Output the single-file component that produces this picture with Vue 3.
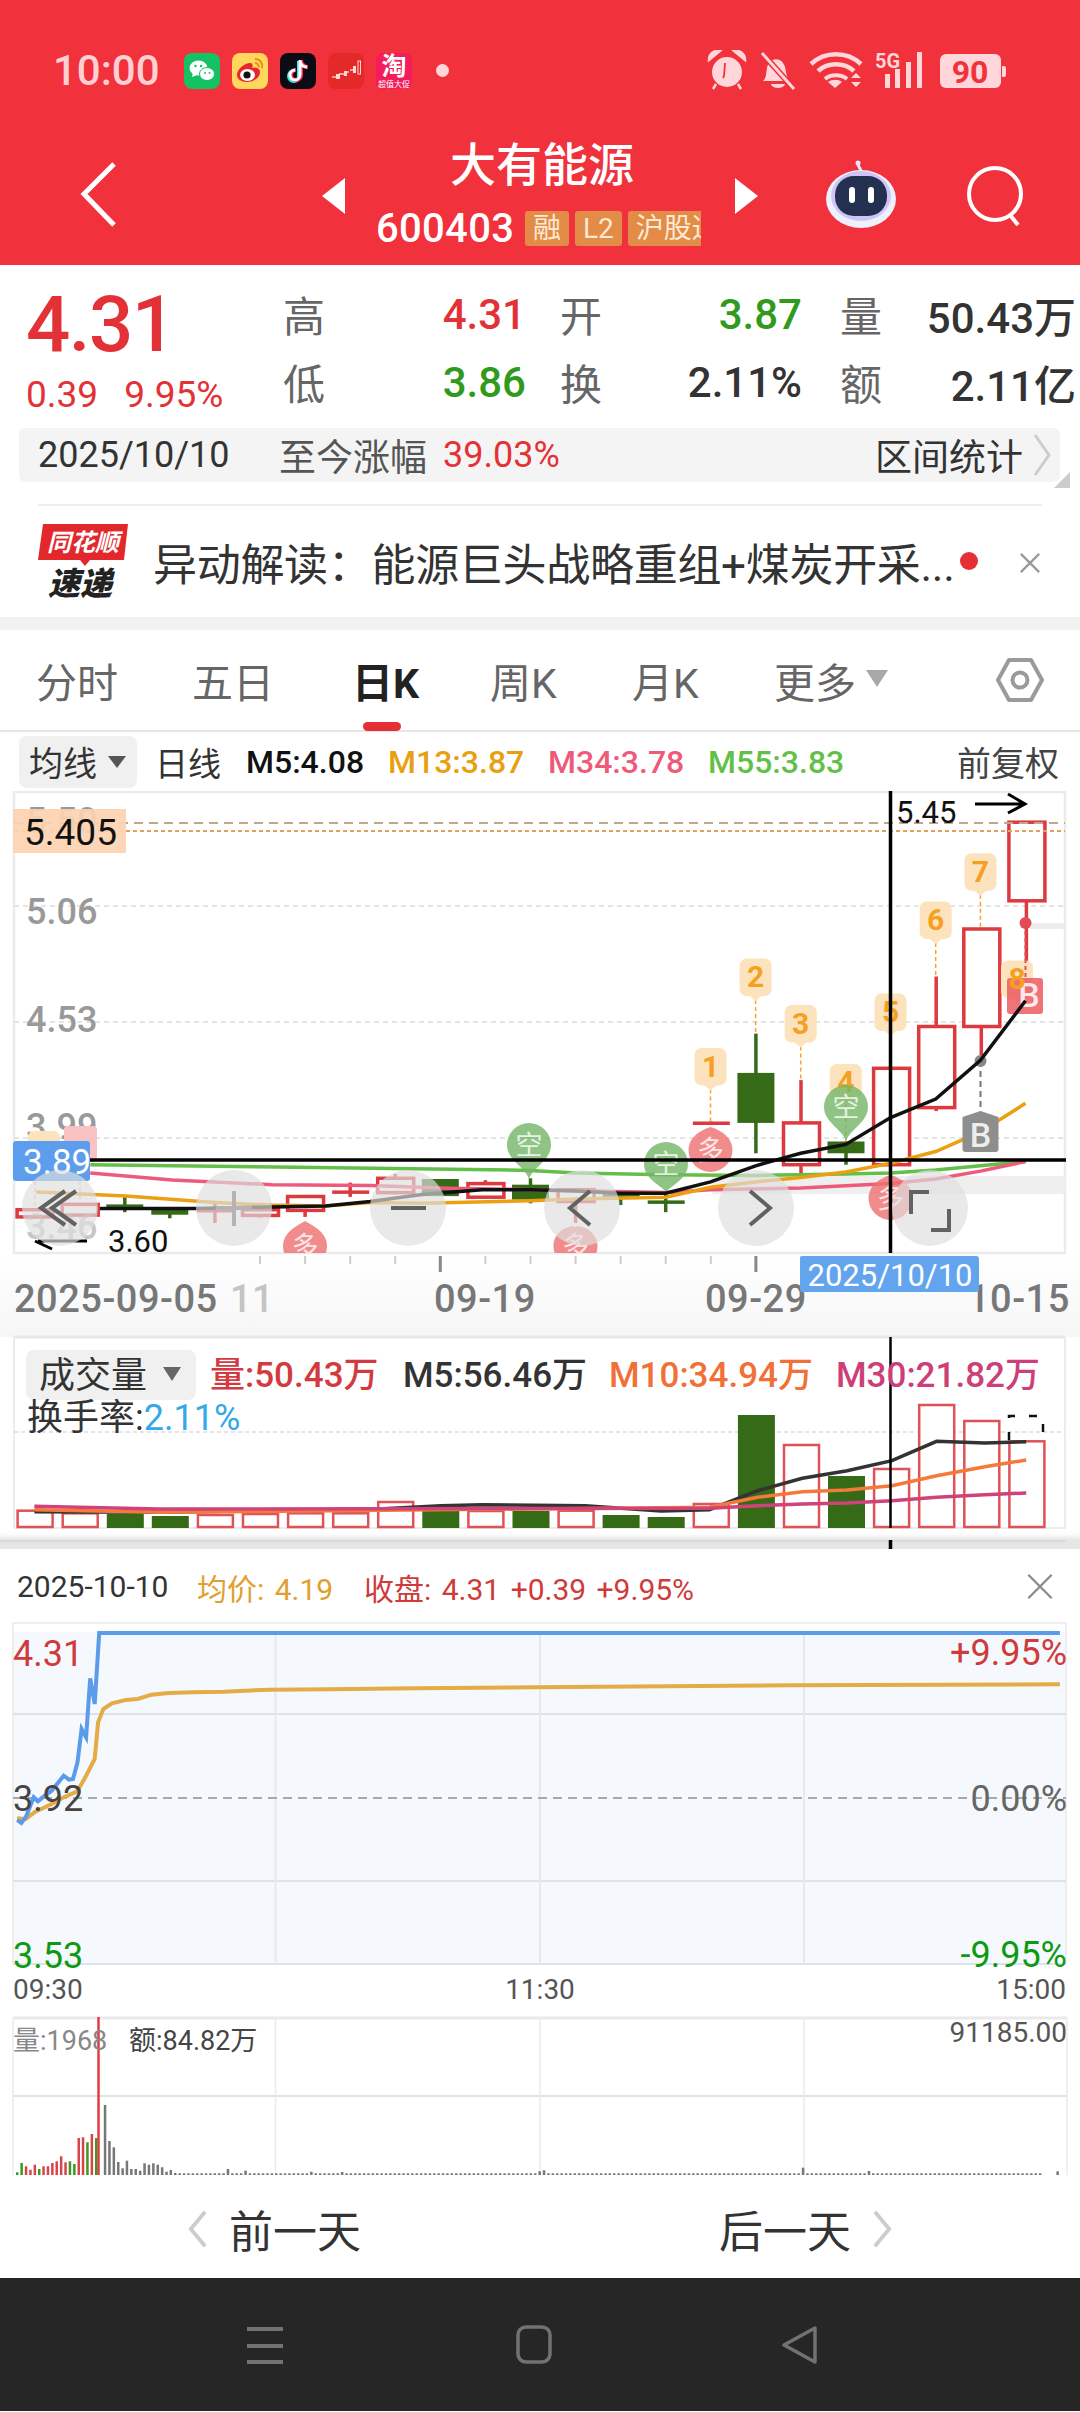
<script setup>
const y = z => +(740 + z / 2.8).toFixed(1)
const x3 = x => +(x / 2.904).toFixed(1)
const x4 = x => +(540 + x / 2.904).toFixed(1)
const cx = i => +(34.6 + 45.08 * i).toFixed(1)

const raw = [
  ['r',1318,1338,1318,1338],['r',1303,1333,1303,1333],['g',1303,1318,1283,1325],['g',1318,1332,1318,1342],
  ['r',1316,1319,1300,1355],['r',1318,1334,1300,1340],['r',1281,1320,1281,1338],['r',1264,1267,1242,1282],
  ['r',1230,1270,1218,1275],['g',1232,1280,1232,1280],['r',1245,1283,1235,1283],['g',1248,1290,1230,1300],
  ['r',1262,1295,1262,1355],['g',1272,1280,1272,1305],['g',1292,1300,1275,1325],['r',1071,1079,1071,1079],
  ['g',935,1075,825,1160],['r',1075,1192,955,1220],['g',1127,1160,1127,1192],['r',922,1192,922,1192],
  ['r',805,1032,665,1042],['r',532,805,532,900],['r',233,453,233,660]
]
const candles = raw.map(([t, a, b, c, d], i) => ({
  t, x: cx(i), top: y(a), h: Math.max(2, y(b) - y(a)), wt: y(c), wb: y(d), thin: b - a < 10
}))

const line = (left, right) => [...left.map(([a, b]) => `${x3(a)},${y(b)}`), ...right.map(([a, b]) => `${x4(a)},${y(b)}`)].join(' ')
const m5 = line([[290,1315],[570,1315],[790,1310],[945,1308],[1075,1295],[1225,1275],[1400,1262],[1540,1262]],
  [[104,1266],[233,1272],[365,1272],[495,1240],[626,1195],[700,1175],[757,1160],[888,1135],[1018,1060],[1149,1008],[1279,900],[1410,733]])
const m13 = line([[105,1268],[365,1280],[625,1298],[790,1305],[945,1308],[1075,1298],[1225,1300],[1540,1293]],
  [[104,1288],[365,1283],[495,1255],[626,1240],[757,1228],[888,1212],[1018,1188],[1149,1155],[1279,1100],[1410,1020]])
const m34 = line([[262,1215],[500,1235],[790,1248],[1075,1250],[1300,1258],[1540,1262]],
  [[104,1265],[365,1270],[495,1262],[757,1257],[1018,1245],[1149,1232],[1279,1210],[1410,1183]])
const m55 = line([[262,1192],[800,1198],[1540,1208]],
  [[104,1215],[365,1220],[626,1222],[888,1218],[1018,1215],[1149,1207],[1279,1195],[1410,1183]])

const drop = (c, d, tip, r = 22) => {
  const s = tip < d ? -1 : 1
  return `M${c} ${tip}C${c + 4} ${d + s * r} ${c + r} ${d + s * r * 0.7} ${c + r} ${d}A${r} ${r} 0 1 ${s < 0 ? 1 : 0} ${c - r} ${d}C${c - r} ${d + s * r * 0.7} ${c - 4} ${d + s * r} ${c} ${tip}Z`
}
const markers = [
  { t: '多', c: 305, d: 1247, tip: 1222 }, { t: '空', c: 529, d: 1146, tip: 1180 },
  { t: '空', c: 666, d: 1165, tip: 1193 }, { t: '多', c: 710.5, d: 1151, tip: 1128 },
  { t: '多', c: 575.5, d: 1247, tip: 1228 }, { t: '空', c: 846, d: 1108, tip: 1142 },
  { t: '多', c: 890.5, d: 1199, tip: 1176 }
].map(m => ({ ...m, path: drop(m.c, m.d, m.tip), fill: m.t === '多' ? '#ef6f6f' : '#74b567' }))

const tags = [
  { n: 1, c: 710.5, a: 865, b: 970, e: 1075 }, { n: 2, c: 755.6, a: 615, b: 720, e: 825 },
  { n: 3, c: 800.7, a: 745, b: 850, e: 955 }, { n: 4, c: 845.8, a: 910, b: 1010, e: 1127 },
  { n: 5, c: 890.5, a: 713, b: 818, e: 922 }, { n: 6, c: 935.7, a: 455, b: 560, e: 665 },
  { n: 7, c: 980.4, a: 320, b: 425, e: 532 }, { n: 8, c: 1017, a: 620, b: 725, e: 725 }
].map(t => ({ ...t, top: y(t.a), bot: y(t.b), end: y(t.e), mid: (y(t.a) + y(t.b)) / 2 + 10 }))

const ticks = Array.from({ length: 16 }, (_, i) => cx(i + 5)).map((x, i) => ({ x, big: [4, 11].includes(i) }))

const vy = z => +(1300 + z / 3).toFixed(1)
const vtops = [632,640,645,651,645,642,640,640,606,636,633,636,632,648,654,612,348,435,531,507,315,363,424]
const vgreen = [2,3,9,11,13,14,16,18]
const vbars = vtops.map((z, i) => ({ x: cx(i) - 18, y: vy(z), h: 1529 - vy(z), g: vgreen.includes(i) }))
const vl = a => a.map(([p, q]) => `${(p / 1.452).toFixed(1)},${vy(q)}`).join(' ')
const v5 = vl([[50,638],[230,640],[550,630],[640,620],[700,617],[850,620],[960,636],[1030,632],[1100,575],[1165,538],[1230,515],[1295,485],[1360,427],[1430,432],[1490,428]])
const v10 = vl([[50,632],[230,640],[1030,625],[1100,595],[1165,578],[1230,573],[1295,560],[1360,530],[1430,503],[1490,483]])
const v30 = vl([[50,622],[230,630],[1030,628],[1100,620],[1165,615],[1230,612],[1295,605],[1360,595],[1430,587],[1490,582]])

const px = a => a.map(([p, q]) => `${(p / 2.904).toFixed(1)},${(1560 + q / 3).toFixed(1)}`).join(' ')
const blue = px([[50,783],[62,792],[75,775],[98,715],[110,727],[130,710],[150,695],[185,650],[200,662],[212,660],[225,610],[237,510],[250,535],[262,358],[275,435],[288,222],[3078,222]])
const avg = px([[50,778],[75,780],[100,760],[150,735],[185,715],[225,697],[250,650],[275,600],[285,490],[300,450],[325,433],[365,423],[400,420],[440,407],[490,402],[560,400],[650,398],[780,392],[960,391],[1210,388],[1560,385],[2300,379],[3078,376]])

const head = [['g',580],['g',552],['r',562],['r',572],['r',557],['g',570],['r',562],['r',562],['r',552],['r',547],['r',532],['r',550],['g',547],['g',555],['r',477],['r',475],['g',490],['r',465],['g',477],['k',588],['k',378],['k',486],['k',505],['k',549],['k',568],['k',545],['k',570],['k',570],['k',575],['k',553],['k',557],['k',553],['k',557],['k',565],['k',578],['k',573],['k',582]]
const special = { 48: 570, 52: 575, 67: 578, 74: 579, 119: 577, 120: 574, 179: 566, 194: 576, 237: 577 }
const miniBars = []
for (let i = 0; i < 238; i++) {
  if (i > 233 && i < 237) continue
  const [c, z] = head[i] || ['k', special[i] || 583]
  const yy = 1980 + z / 3
  miniBars.push({ x: +(16 + 4.39 * i).toFixed(1), y: +yy.toFixed(1), h: +(2176 - yy).toFixed(1), c: { g: '#3a9a1e', r: '#d9434a', k: '#777' }[c] })
}
</script>

<template>
  <div class="phone">
    <header class="top">
      <div class="status">
        <span class="clock">10:00</span>
        <div class="apps">
          <svg class="app" viewBox="0 0 36 36">
            <rect width="36" height="36" rx="8" fill="#14c264" />
            <ellipse cx="14.500" cy="15" rx="9" ry="7.500" fill="#fff" /><path d="M9 20l-1 4 5-2z" fill="#fff" />
            <ellipse cx="23" cy="21" rx="7.500" ry="6.500" fill="#fff" stroke="#14c264" />
            <circle cx="11.500" cy="13" r="1.200" fill="#14c264" /><circle cx="17" cy="13" r="1.200" fill="#14c264" />
            <circle cx="21" cy="20" r="1" fill="#14c264" /><circle cx="25.500" cy="20" r="1" fill="#14c264" />
          </svg>
          <svg class="app" viewBox="0 0 36 36">
            <rect width="36" height="36" rx="8" fill="#ffd75c" />
            <path d="M5 22c0-6 8-12 13-12 3 0 3 3 2 5 5-1 8 1 8 4 0 6-7 10-13 10-6 0-10-3-10-7z" fill="#e6262c" />
            <ellipse cx="15.500" cy="22" rx="7.500" ry="6" fill="#fff" /><circle cx="15" cy="22" r="3.600" fill="#111" />
            <path d="M23 6c5 0 8 4 7 9M23 10c2.500 0 4 2 3.500 4.500" stroke="#ee8a1c" stroke-width="2" fill="none" />
          </svg>
          <svg class="app" viewBox="0 0 36 36">
            <rect width="36" height="36" rx="8" fill="#0b0b16" />
            <path d="M20 7v15a5 5 0 1 1-5-5" stroke="#25f4ee" stroke-width="4" fill="none" transform="translate(-1 1)" />
            <path d="M20 7v15a5 5 0 1 1-5-5M20 8c1 4 4 6 7 6" stroke="#fe2c55" stroke-width="4" fill="none" transform="translate(1 0)" />
            <path d="M20 7v15a5 5 0 1 1-5-5M20 8c1 4 4 6 7 6" stroke="#fff" stroke-width="3" fill="none" />
          </svg>
          <svg class="app" viewBox="0 0 36 36">
            <rect width="36" height="36" rx="8" fill="#e32a28" />
            <path d="M4 24h5M11 21h5M17 19h4M22 17h4" stroke="#ffc9c4" stroke-width="1.500" />
            <rect x="8" y="21" width="4" height="5" fill="#ffd9d6" /><rect x="16" y="18" width="3" height="5" fill="#ffd9d6" />
            <rect x="25" y="13" width="3" height="7" fill="#ffd9d6" /><rect x="30" y="8" width="2.500" height="13" fill="none" stroke="#ffd9d6" />
          </svg>
          <div class="app tb"><span>淘</span><i>超值大促</i></div>
          <span class="dot"></span>
        </div>
        <svg class="sys" viewBox="705 50 305 44">
          <g fill="#ffd6d9" stroke="#ffd6d9">
            <circle cx="727" cy="72" r="15" stroke="none" />
            <path d="M724 76l1-13" fill="none" stroke="#f1313c" stroke-width="1.800" /><path d="M724 76l-1 2" fill="none" stroke="#f1313c" stroke-width="1.800" />
            <path d="M709 60a9 9 0 0 1 11-9zM745 60a9 9 0 0 0-11-9zM716 84l-3 5M738 84l3 5" stroke-width="2.500" />
            <path d="M763 81c5-4 2-13 6-18 3-5 11-5 14 0 4 5 2 14 7 18z" stroke="none" />
            <path d="M762 53l32 36" stroke="#f1313c" stroke-width="6" /><path d="M762 53l32 36" stroke-width="3" />
            <path d="M771 84a7 4 0 0 0 14 0z" stroke="none" />
            <path d="M811 64c14-13 36-13 50 0M818 71c10-9 26-9 36 0" fill="none" stroke-width="4.500" />
            <path d="M825 79c6-5 16-5 22 0" fill="none" stroke-width="4" />
            <path d="M828 82c4-3 10-3 14 0l-7 6z" stroke="none" />
            <path d="M851 78l5-5 5 5zM851 82l5 5 5-5z" stroke="none" />
            <g stroke="none"><rect x="885" y="74" width="5" height="14" /><rect x="895" y="69" width="5" height="19" /><rect x="906" y="62" width="5" height="26" /><rect x="917" y="52" width="5" height="36" /></g>
            <rect x="940" y="54" width="61" height="34" rx="6" stroke="none" /><path d="M1002 66h2a2 2 0 0 1 2 2v7a2 2 0 0 1-2 2h-2z" stroke="none" />
          </g>
          <text x="875" y="68" class="fiveg">5G</text>
          <text x="970" y="83" class="batt" text-anchor="middle">90</text>
        </svg>
      </div>
      <div class="bar">
        <svg class="back" viewBox="0 0 40 70"><path d="M36 4L6 34l30 31" fill="none" stroke="#fff" stroke-width="5" /></svg>
        <div class="title-wrap">
          <i class="tri tri-l"></i>
          <div class="title">
            <div class="name">大有能源</div>
            <div class="code"><span>600403</span><em>融</em><em>L2</em><em class="clip"><b>沪股通</b></em></div>
          </div>
          <i class="tri tri-r"></i>
        </div>
        <svg class="robot" viewBox="0 0 72 70">
          <path d="M36 12c-1-4-3-4-3-7" stroke="#e9e6ff" stroke-width="3" fill="none" /><circle cx="33" cy="4" r="2.500" fill="#e9e6ff" />
          <ellipse cx="36" cy="40" rx="35" ry="29" fill="#eef0fb" />
          <ellipse cx="36" cy="37" rx="30" ry="25" fill="#cfc4f7" />
          <rect x="10" y="17" width="52" height="40" rx="19" fill="#24304f" />
          <rect x="24" y="28" width="6" height="16" rx="3" fill="#fff" /><rect x="43" y="28" width="6" height="16" rx="3" fill="#fff" />
        </svg>
        <svg class="search" viewBox="0 0 60 62"><circle cx="29" cy="29" r="26" fill="none" stroke="#fff" stroke-width="4" /><path d="M44 50l8 10" stroke="#fff" stroke-width="4" /></svg>
      </div>
    </header>

    <section class="quote">
      <div class="price">
        <div class="big">4.31</div>
        <div class="small"><span>0.39</span><span>9.95%</span></div>
      </div>
      <div class="stats">
        <span class="lb">高</span><span class="val red">4.31</span>
        <span class="lb">开</span><span class="val green">3.87</span>
        <span class="lb">量</span><span class="val">50.43万</span>
        <span class="lb">低</span><span class="val green">3.86</span>
        <span class="lb">换</span><span class="val">2.11%</span>
        <span class="lb">额</span><span class="val">2.11亿</span>
      </div>
    </section>

    <div class="range">
      <span class="rdate">2025/10/10</span>
      <span class="rlabel">至今涨幅</span>
      <span class="rpct">39.03%</span>
      <span class="rstat">区间统计</span>
      <svg class="rchev" viewBox="0 0 20 46"><path d="M3 3l14 20L3 43" fill="none" stroke="#ccc" stroke-width="3" /></svg>
      <i class="corner"></i>
    </div>
    <div class="divider"></div>

    <div class="news">
      <svg class="logo" viewBox="0 0 90 74">
        <path d="M5 0h85l-4 36H52l-5 6-5-6H0z" fill="#e2272d" />
        <text x="45" y="27" class="logo-a" text-anchor="middle">同花顺</text>
        <text x="42" y="71" class="logo-b" text-anchor="middle">速递</text>
      </svg>
      <span class="news-text">异动解读：能源巨头战略重组+煤炭开采...</span>
      <i class="news-dot"></i>
      <svg class="news-x" viewBox="0 0 24 24"><path d="M2 2l20 20M22 2L2 22" stroke="#999" stroke-width="2.500" /></svg>
    </div>
    <div class="band"></div>

    <nav class="tabs">
      <span>分时</span><span>五日</span><span class="on">日K</span><span>周K</span><span>月K</span>
      <span class="more">更多<i></i></span>
      <svg class="hex" viewBox="0 0 48 46">
        <path d="M2 23L13 3h22l11 20-11 20H13z" fill="none" stroke="#9a9a9a" stroke-width="4" stroke-linejoin="round" />
        <circle cx="24" cy="23" r="7.500" fill="none" stroke="#9a9a9a" stroke-width="4" />
      </svg>
      <b class="under"></b>
    </nav>

    <div class="ma">
      <span class="ma-btn">均线<i></i></span>
      <span class="ma-day">日线</span>
      <span class="ma-v m5">M5:4.08</span>
      <span class="ma-v m13">M13:3.87</span>
      <span class="ma-v m34">M34:3.78</span>
      <span class="ma-v m55">M55:3.83</span>
      <span class="ma-fq">前复权</span>
    </div>

    <svg class="kchart" viewBox="0 792 1080 758">
      <defs>
        <clipPath id="plot"><rect x="13" y="792" width="1053" height="462" /></clipPath>
        <linearGradient id="fade" x1="0" y1="0" x2="0" y2="1"><stop offset="0" stop-color="#fff" /><stop offset="1" stop-color="#f6f6f6" /></linearGradient>
        <linearGradient id="shade" x1="0" y1="0" x2="0" y2="1"><stop offset="0" stop-color="#fff" /><stop offset=".5" stop-color="#fcfcfc" /><stop offset="1" stop-color="#e6e6e6" /></linearGradient>
      </defs>
      <rect x="0" y="1254" width="1080" height="84" fill="url(#fade)" />
      <rect x="14" y="793" width="1051" height="461" fill="#fff" stroke="#ebebeb" stroke-width="2.500" />

      <path v-for="g in [907, 1023, 1139]" :key="g" :d="`M14 ${g}H1065`" stroke="#ddd" stroke-width="1.500" stroke-dasharray="5 4" />
      <text x="26" y="834" class="axis">5.50</text>
      <text x="26" y="925" class="axis">5.06</text>
      <text x="26" y="1033" class="axis">4.53</text>
      <text x="26" y="1140" class="axis">3.99</text>
      <rect x="712" y="1177" width="353" height="18" fill="#efefef" />
      <rect x="1030" y="924" width="35" height="6" fill="#ececec" />
      <rect x="28" y="1132" width="32" height="20" rx="6" fill="#fde3bd" />
      <rect x="64" y="1127" width="33" height="36" rx="4" fill="#f9c3c3" />
      <path d="M35 1182V1220M80 1182V1220" stroke="#eebc96" stroke-width="1.500" stroke-dasharray="4 3" />

      <g clip-path="url(#plot)">
        <g v-for="(c, i) in candles" :key="i">
          <line :x1="c.x" :x2="c.x" :y1="c.wt" :y2="c.wb" :stroke="c.t === 'r' ? '#dd3a3f' : '#356a17'" stroke-width="3.500" />
          <rect v-if="c.thin" :x="c.x - 18" :y="c.top" width="37" height="3.500" :fill="c.t === 'r' ? '#dd3a3f' : '#356a17'" />
          <rect v-else-if="c.t === 'g'" :x="c.x - 18.500" :y="c.top" width="37" :height="c.h" fill="#356a17" />
          <rect v-else :x="c.x - 17.500" :y="c.top" width="36" :height="c.h" fill="#fff" stroke="#dd3a3f" stroke-width="3.500" />
        </g>
        <polyline :points="m55" fill="none" stroke="#62bf47" stroke-width="3.500" />
        <polyline :points="m34" fill="none" stroke="#ee5a7a" stroke-width="3.500" />
        <polyline :points="m13" fill="none" stroke="#eba012" stroke-width="3.500" />

        <g v-for="t in tags" :key="t.n">
          <path :d="`M${t.c} ${t.bot + 4}V${t.end}`" stroke="#f2a42b" stroke-width="1.500" stroke-dasharray="4 3" fill="none" />
          <rect :x="t.c - 16" :y="t.top" width="32" :height="t.bot - t.top" rx="7" fill="#fde3bd" />
          <path :d="`M${t.c - 7} ${t.bot - 1}L${t.c} ${t.bot + 5}L${t.c + 7} ${t.bot - 1}Z`" fill="#fde3bd" />
          <text v-if="t.n !== 8" :x="t.c" :y="t.mid" class="tagnum" text-anchor="middle">{{ t.n }}</text>
        </g>
        <g v-for="(m, i) in markers" :key="i">
          <path :d="m.path" :fill="m.fill" opacity=".8" />
          <text :x="m.c" :y="m.d + 10" class="marker" text-anchor="middle">{{ m.t }}</text>
        </g>
        <path d="M1025.500 925V979" stroke="#e05050" stroke-width="2" stroke-dasharray="4 3" />
        <circle cx="1025.500" cy="924" r="6" fill="#e34b52" />
        <rect x="1007" y="979" width="36" height="36" rx="3" fill="#ec5a60" fill-opacity=".85" />
        <text x="1029" y="1008" class="bmark" text-anchor="middle">B</text>
        <text x="1017" y="990" class="tagnum" text-anchor="middle">8</text>
        <path d="M980.500 1062V1110" stroke="#777" stroke-width="2" stroke-dasharray="6 4" />
        <circle cx="980.500" cy="1062" r="6" fill="#888" />
        <path d="M962.500 1118l18-6 18 6v32a3 3 0 0 1-3 3h-30a3 3 0 0 1-3-3z" fill="#8e8e8e" />
        <text x="980.500" y="1148" class="bmark" text-anchor="middle">B</text>
        <polyline :points="m5" fill="none" stroke="#111" stroke-width="3.500" />
      </g>

      <g fill="none">
        <path d="M14 824H1065" stroke="#c2a888" stroke-width="2" stroke-dasharray="9 6" />
        <path d="M14 832H1065" stroke="#e0a25c" stroke-width="2" stroke-dasharray="4 3" />
      </g>
      <rect x="13" y="810" width="113" height="44" fill="#fdd3b1" fill-opacity=".92" />
      <text x="24" y="846" class="hi">5.405</text>

      <path d="M90 1161H1066" stroke="#000" stroke-width="3.500" />
      <path d="M890.500 792V1254" stroke="#000" stroke-width="3.500" />
      <text x="896" y="824" class="note">5.45</text>
      <path d="M975 805H1024M1008 795l17 10-17 9" fill="none" stroke="#000" stroke-width="3" />

      <rect x="13" y="1142" width="77" height="40" rx="3" fill="#5c9ded" />
      <text x="23" y="1175" class="blue-t">3.89</text>

      <text x="26" y="1240" class="axis" opacity=".55">3.46</text>
      <text x="108" y="1253" class="note">3.60</text>
      <path d="M87 1242H38M52 1250l-17-8" fill="none" stroke="#000" stroke-width="3" />

      <g fill="#dedede" fill-opacity=".68">
        <circle cx="60" cy="1209" r="38" /><circle cx="234" cy="1209" r="38" /><circle cx="408" cy="1209" r="38" />
        <circle cx="582" cy="1209" r="38" /><circle cx="756" cy="1209" r="38" /><circle cx="930" cy="1209" r="38" />
      </g>
      <g fill="none" stroke="#626262" stroke-width="4">
        <path d="M65 1192l-24 17 24 17M76 1192l-24 17 24 17" />
        <path d="M234 1192v35" stroke="#b4b4b4" /><path d="M216 1209h36" stroke="#b4b4b4" />
        <path d="M391 1209h35" />
        <path d="M590 1192l-20 17 20 17" />
        <path d="M750 1192l20 17-20 17" />
        <path d="M911 1215v-22h18M949 1210v21h-18" />
      </g>

      <g>
        <path v-for="t in ticks" :key="t.x" :d="`M${t.x} 1257V${t.big ? 1273 : 1265}`" :stroke="t.big ? '#888' : '#ccc'" :stroke-width="t.big ? 3 : 2" />
      </g>
      <text x="14" y="1313" class="date">2025-09-05</text>
      <text x="230" y="1313" class="date lt">11</text>
      <text x="434" y="1313" class="date">09-19</text>
      <text x="705" y="1313" class="date">09-29</text>
      <text x="968" y="1313" class="date">10-15</text>
      <rect x="800" y="1257" width="179" height="36" rx="3" fill="#63a4ee" />
      <text x="890" y="1287" class="datebox" text-anchor="middle">2025/10/10</text>

      <rect x="14" y="1338" width="1051" height="191" fill="#fff" />
      <path d="M14 1338H1065" stroke="#e8e8e8" stroke-width="3" />
      <path d="M14 1338V1529M1065 1338V1529M14 1529H1066" stroke="#ececec" stroke-width="2" />
      <path d="M14 1433H1065" stroke="#ddd" stroke-width="1.500" stroke-dasharray="4 3" />
      <g v-for="(b, i) in vbars" :key="i">
        <rect v-if="b.g" :x="b.x" :y="b.y" width="37" :height="b.h" fill="#356a17" />
        <rect v-else :x="b.x + 1" :y="b.y + 1" width="35" :height="b.h - 2" fill="#fff" stroke="#df5257" stroke-width="2.500" />
      </g>
      <path d="M1009 1441v-24h34v24" fill="none" stroke="#111" stroke-width="2.500" stroke-dasharray="8 14" />
      <polyline :points="v5" fill="none" stroke="#333" stroke-width="3.500" />
      <polyline :points="v10" fill="none" stroke="#f5793a" stroke-width="3.500" />
      <polyline :points="v30" fill="none" stroke="#cf4379" stroke-width="3.500" />
      <path d="M890.500 1338V1529" stroke="#000" stroke-width="2.500" />

      <rect x="26" y="1351" width="170" height="50" rx="8" fill="#f0f0f0" />
      <text x="39" y="1389" class="v-btn">成交量</text>
      <path d="M163 1368h18l-9 14z" fill="#666" />
      <text x="210" y="1388" class="v-leg" fill="#d33a3f">量:50.43万</text>
      <text x="403" y="1388" class="v-leg" fill="#333">M5:56.46万</text>
      <text x="609" y="1388" class="v-leg" fill="#f07038">M10:34.94万</text>
      <text x="836" y="1388" class="v-leg" fill="#cc3f78">M30:21.82万</text>
      <text x="27" y="1431" class="v-leg v-two" fill="#333">换手率:<tspan fill="#35a8e8">2.11%</tspan></text>

      <rect x="0" y="1530" width="1080" height="11" fill="url(#shade)" />
      <rect x="0" y="1541" width="1080" height="9" fill="#e6e6e6" />
      <path d="M0 1542H1066" stroke="#d9d9d9" stroke-width="2" />
      <path d="M890.500 1541V1550" stroke="#000" stroke-width="3.500" />
    </svg>

    <section class="sheet">
      <div class="sheet-head">
        <span class="sh-date">2025-10-10</span>
        <span class="sh-avg">均价: 4.19</span>
        <span class="sh-close">收盘: 4.31 +0.39 +9.95%</span>
        <svg class="sh-x" viewBox="0 0 30 30"><path d="M2 2l26 26M28 2L2 28" stroke="#8a8a8a" stroke-width="2.500" /></svg>
      </div>
      <svg class="mini" viewBox="0 1623 1080 553">
        <rect x="12" y="1624" width="1055" height="341" fill="#f5f9fe" />
        <rect x="12" y="1624" width="1055" height="9" fill="#fff" />
        <path d="M12 1624H1067" stroke="#efefef" stroke-width="2" />
        <path d="M13 1624V1965M1066 1624V1965" stroke="#eeeeee" stroke-width="2" />
        <path d="M13 1715H1066M13 1882H1066M13 1965H1066" stroke="#dfe2e6" stroke-width="2" />
        <path d="M275.500 1634V1965M540 1634V1965M804 1634V1965" stroke="#e6e9ee" stroke-width="2" />
        <path d="M13 1799H1066" stroke="#a8a8a8" stroke-width="2" stroke-dasharray="9 6" />
        <polyline :points="avg" fill="none" stroke="#e4ab47" stroke-width="4" />
        <polyline :points="blue" fill="none" stroke="#5a9bea" stroke-width="4" />
        <text x="13" y="1667" class="m-l" fill="#cf3a3a">4.31</text>
        <text x="13" y="1812" class="m-l" fill="#444">3.92</text>
        <text x="13" y="1969" class="m-l" fill="#0d9a12">3.53</text>
        <text x="1067" y="1666" class="m-r" fill="#cf3a3a" text-anchor="end">+9.95%</text>
        <text x="1067" y="1812" class="m-r" fill="#666" text-anchor="end">0.00%</text>
        <text x="1067" y="1968" class="m-r" fill="#0d9a12" text-anchor="end">-9.95%</text>
        <text x="13" y="2000" class="m-t">09:30</text>
        <text x="540" y="2000" class="m-t" text-anchor="middle">11:30</text>
        <text x="1066" y="2000" class="m-t" text-anchor="end">15:00</text>

        <path d="M13 2019H1067" stroke="#eaeaea" stroke-width="3" />
        <path d="M13 2097H1067" stroke="#e2e2e2" stroke-width="2" />
        <path d="M275.500 2019V2176M540 2019V2176M804 2019V2176M1067 2019V2176M13 2019V2176" stroke="#ececec" stroke-width="1.500" />
        <rect v-for="(b, i) in miniBars" :key="i" :x="b.x" :y="b.y" width="2.500" :height="b.h" :fill="b.c" />
        <path d="M98.500 2018V2176" stroke="#e03c44" stroke-width="2.500" />
        <text x="13" y="2051" class="m-s" fill="#888">量:1968</text>
        <text x="129" y="2051" class="m-s" fill="#444">额:84.82万</text>
        <text x="1067" y="2043" class="m-t m-n" text-anchor="end">91185.00</text>
      </svg>
      <div class="days">
        <div class="day">
          <svg class="dchev" viewBox="0 0 22 40"><path d="M19 2L4 20l15 18" fill="none" stroke="#ccc" stroke-width="4" /></svg>
          <span>前一天</span>
        </div>
        <div class="day">
          <span>后一天</span>
          <svg class="dchev" viewBox="0 0 22 40"><path d="M3 2l15 18L3 38" fill="none" stroke="#ccc" stroke-width="4" /></svg>
        </div>
      </div>
    </section>

    <footer class="navbar">
      <svg viewBox="0 0 36 40" class="nav-ic"><path d="M0 4h36M0 21h36M0 37h36" stroke="#727272" stroke-width="4" /></svg>
      <svg viewBox="0 0 36 40" class="nav-ic"><rect x="2" y="2" width="32" height="35" rx="8" fill="none" stroke="#727272" stroke-width="3.500" /></svg>
      <svg viewBox="0 0 36 40" class="nav-ic"><path d="M2 20L33 3v34z" fill="none" stroke="#727272" stroke-width="3.500" stroke-linejoin="round" /></svg>
    </footer>
  </div>
</template>

<style scoped>
.phone { position: relative; width: 1080px; height: 2412px; overflow: hidden; background: #fff; font-family: Roboto, "Noto Sans CJK SC", sans-serif; color: #333; }
.top { height: 265px; background: #f1313c; box-sizing: border-box; }
.status { height: 144px; display: flex; align-items: center; padding-left: 53px; padding-bottom: 3px; box-sizing: border-box; position: relative; }
.clock { font-size: 42px; font-weight: 500; color: #ffd0d3; width: 131px; }
.apps { display: flex; gap: 12px; align-items: center; }
.app { width: 36px; height: 36px; display: block; }
.tb { background: #f21d5a; border-radius: 7px; color: #fff; display: flex; flex-direction: column; align-items: center; overflow: hidden; }
.tb span { font-size: 25px; line-height: 27px; font-weight: 700; }
.tb i { font-size: 8px; line-height: 9px; font-style: normal; white-space: nowrap; }
.dot { width: 13px; height: 13px; border-radius: 50%; background: #ffd6d9; margin-left: 12px; }
.sys { position: absolute; left: 705px; top: 50px; width: 305px; height: 44px; }
.fiveg { font-size: 20px; font-weight: 700; fill: #ffd6d9; }
.batt { font-size: 32px; font-weight: 700; fill: #f1313c; }
.bar { height: 121px; position: relative; display: flex; }
.back { position: absolute; left: 78px; top: 16px; width: 40px; height: 70px; }
.title-wrap { position: absolute; left: 322px; width: 436px; top: 0; display: flex; justify-content: space-between; align-items: center; height: 121px; }
.tri { display: block; width: 0; height: 0; border-top: 18px solid transparent; border-bottom: 18px solid transparent; margin-top: -17px; }
.tri-l { border-right: 23px solid #fff; }
.tri-r { border-left: 23px solid #fff; }
.title { position: absolute; left: 54px; top: -4px; width: 340px; color: #fff; }
.name { font-size: 46px; line-height: 50px; text-align: center; margin-top: 0; margin-left: -8px; font-weight: 500; }
.code { display: flex; align-items: center; margin-top: 20px; height: 36px; }
.code span { font-size: 40px; font-weight: 500; width: 149px; letter-spacing: .3px; }
.code em { font-style: normal; background: #e28c47; color: #ffe9d4; font-size: 28px; line-height: 35px; height: 35px; border-radius: 3px; padding: 0 8px; margin-right: 6px; display: block; white-space: nowrap; }
.clip { width: 65px; overflow: hidden; padding-right: 0 !important; margin-right: 0 !important; border-radius: 3px 0 0 3px !important; }
.clip b { font-weight: 400; }
.robot { position: absolute; left: 825px; top: 15px; width: 72px; height: 70px; }
.search { position: absolute; left: 966px; top: 21px; width: 60px; height: 62px; }
.quote { height: 163px; display: flex; }
.price { width: 283px; padding-left: 26px; box-sizing: border-box; }
.big { font-size: 78px; line-height: 68px; margin-top: 26px; font-weight: 500; color: #e33237; letter-spacing: -1.500px; }
.small { font-size: 37px; line-height: 48px; margin-top: 12px; color: #e33237; display: flex; gap: 26px; }
.stats { padding-top: 14px; display: grid; grid-template-columns: 42px 201px 76px 200px 80px 194px; grid-auto-rows: 68px; align-items: center; }
.lb { font-size: 42px; color: #666; text-align: right; white-space: nowrap; }
.val { font-size: 42px; font-weight: 500; color: #333; text-align: right; white-space: nowrap; margin-top: 2px; }
.red { color: #e33237; }
.green { color: #2f9a1c; }
.range { position: relative; margin: 0 20px 0 19px; height: 54px; background: #f4f4f4; border-radius: 6px; display: flex; align-items: center; padding-left: 19px; font-size: 36px; }
.rdate { width: 241px; color: #333; }
.rlabel { color: #555; font-size: 37px; }
.rpct { color: #e33237; margin-left: 16px; }
.rstat { margin-left: auto; font-size: 37px; color: #333; }
.rchev { width: 20px; height: 46px; margin: 0 8px 0 9px; }
.corner { position: absolute; right: -10px; bottom: -6px; width: 0; height: 0; border-left: 16px solid transparent; border-bottom: 16px solid #ccc; }
.divider { height: 2px; background: #eee; margin: 22px 38px 0; }
.news { height: 111px; display: flex; align-items: center; padding-left: 38px; position: relative; }
.logo { width: 90px; height: 74px; margin-top: -2px; }
.logo-a { font-size: 24px; font-weight: 700; font-style: italic; fill: #fff; }
.logo-b { font-size: 32px; font-weight: 900; font-style: italic; fill: #222; }
.news-text { font-size: 44px; margin-left: 25px; color: #333; white-space: nowrap; letter-spacing: -.3px; }
.news-dot { position: absolute; left: 960px; top: 46px; width: 18px; height: 18px; border-radius: 50%; background: #e52f34; }
.news-x { position: absolute; left: 1019px; top: 46px; width: 22px; height: 22px; }
.band { height: 13px; background: #f2f2f2; }
.tabs { position: relative; height: 102px; box-sizing: border-box; border-bottom: 2px solid #e6e6e6; padding-left: 36px; display: grid; grid-template-columns: 156px 160px 138px 142px 142px 222px auto; align-items: center; font-size: 41px; color: #666; }
.tabs .on { color: #222; font-weight: 700; }
.more { display: flex; align-items: center; gap: 10px; }
.more i { width: 0; height: 0; border-left: 11px solid transparent; border-right: 11px solid transparent; border-top: 17px solid #a8a8a8; margin-top: -4px; }
.hex { width: 48px; height: 46px; }
.under { position: absolute; left: 363px; top: 92px; width: 38px; height: 9px; border-radius: 5px; background: #e52f34; }
.ma { height: 59px; position: relative; display: flex; align-items: center; padding-left: 19px; font-size: 34px; font-weight: 500; white-space: nowrap; }
.ma-btn { width: 118px; height: 52px; background: #f0f0f0; border-radius: 8px; display: flex; align-items: center; font-size: 34px; font-weight: 400; padding-left: 10px; box-sizing: border-box; color: #333; }
.ma-btn i { width: 0; height: 0; border-left: 9px solid transparent; border-right: 9px solid transparent; border-top: 12px solid #555; margin-left: 11px; }
.ma-day { margin-left: 18px; font-size: 33px; font-weight: 400; width: 91px; color: #333; }
.ma-v { display: block; font-size: 32px; font-weight: 500; }
.m5 { width: 142px; color: #111; }
.m13 { width: 160px; color: #e8a010; }
.m34 { width: 160px; color: #ee5a7a; }
.m55 { width: 249px; color: #62bf47; }
.ma-fq { font-size: 34px; font-weight: 400; color: #444; }
.kchart { display: block; width: 1080px; height: 758px; }
.axis { font-size: 36px; font-weight: 500; fill: #999; }
.hi { font-size: 37px; fill: #111; }
.blue-t { font-size: 35px; fill: #fff; }
.note { font-size: 31px; fill: #111; }
.tagnum { font-size: 30px; font-weight: 700; fill: #f5a020; }
.marker { font-size: 27px; fill: #fff; fill-opacity: .8; }
.bmark { font-size: 34px; font-weight: 500; fill: #fff; fill-opacity: .85; }
.date { font-size: 38px; font-weight: 500; fill: #777; letter-spacing: .5px; }
.lt { fill: #c4c4c4; }
.datebox { font-size: 31px; fill: #fff; }
.v-btn { font-size: 36px; fill: #333; }
.v-leg { font-size: 35px; font-weight: 500; }
.v-two { font-size: 36px; font-weight: 400; }
.sheet { height: 729px; background: #fff; }
.sheet-head { height: 73px; display: flex; align-items: center; padding-left: 17px; position: relative; font-size: 30px; padding-top: 2px; box-sizing: border-box; }
.sh-date { color: #333; width: 180px; }
.sh-avg { color: #e0a030; width: 167px; word-spacing: 3px; }
.sh-close { color: #cf3a3a; word-spacing: 3px; }
.sh-x { position: absolute; left: 1026px; top: 24px; width: 28px; height: 27px; }
.mini { display: block; width: 1080px; height: 553px; }
.m-l, .m-r { font-size: 36px; }
.m-t { font-size: 28px; fill: #555; }
.m-n { font-size: 28px; }
.m-s { font-size: 27px; }
.days { height: 103px; display: flex; position: relative; font-size: 44px; color: #333; }
.day { position: absolute; top: 22px; display: flex; align-items: center; gap: 21px; }
.day:first-child { left: 187px; }
.day:last-child { left: 719px; }
.dchev { width: 21px; height: 40px; }
.navbar { height: 133px; background: #262626; position: relative; display: grid; grid-template-columns: 269px 266px 269px 36px; padding-top: 47px; padding-left: 247px; box-sizing: border-box; }
.nav-ic { width: 36px; height: 40px; display: block; }
</style>
